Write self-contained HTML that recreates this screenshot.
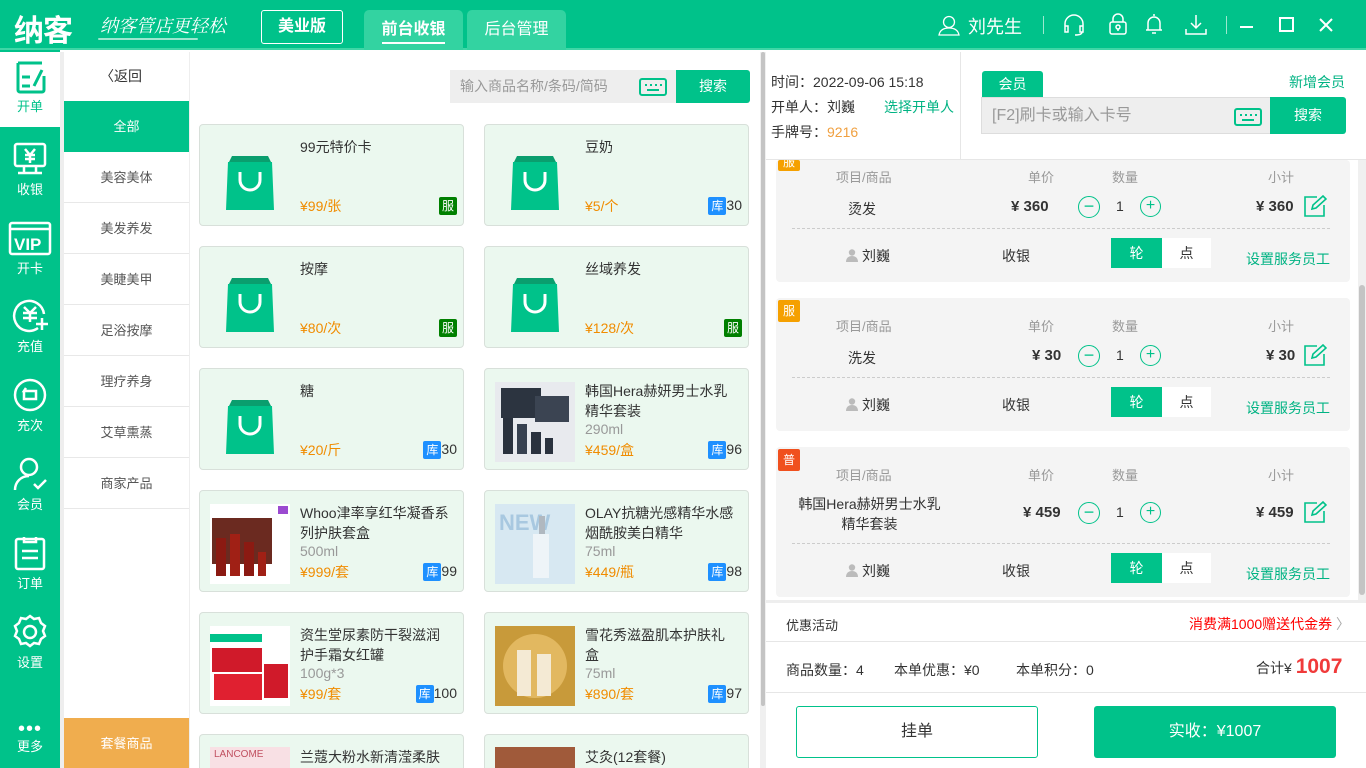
<!DOCTYPE html>
<html><head><meta charset="utf-8"><style>
*{margin:0;padding:0;box-sizing:border-box}
html{width:1366px;height:768px;overflow:hidden}
body{width:1366px;height:768px;overflow:hidden;position:relative;font-family:"Liberation Sans","Noto Sans CJK SC",sans-serif;font-size:14px;color:#333;background:#fff}
.a{position:absolute}
.g{background:#00c28a}
.hdr{left:0;top:0;width:1366px;height:50px;background:#00c28a;border-bottom:2px solid #3fd6a6}
.nav{left:0;top:50px;width:60px;height:718px;background:#00c28a}
.ni{position:absolute;left:0;width:60px;text-align:center;color:#fff;font-size:13px}
.ni svg{display:block;margin:0 auto 2px}
.cat{left:64px;width:125px;height:51px;line-height:51px;text-align:center;border-bottom:1px solid #e8e8e8;font-size:13px;color:#555}
.card{width:265px;height:102px;background:#ebf8ef;border:1px solid #d8e0da;border-radius:4px;overflow:hidden}
.card .t{position:absolute;left:100px;top:12px;width:155px;font-size:14px;line-height:20px;color:#333}
.card .s{position:absolute;left:100px;top:52px;font-size:14px;color:#999}
.card .p{position:absolute;left:100px;bottom:9px;color:#f08c00;font-size:14px}
.card .b{position:absolute;right:6px;bottom:10px;font-size:14px;color:#333}
.tag{display:inline-block;width:18px;height:18px;line-height:18px;text-align:center;color:#fff;font-size:12px;border-radius:2px;vertical-align:middle}
.img{position:absolute;left:10px;top:13px;width:80px;height:80px}
.oc{left:776px;width:574px;background:#f4f4f4;border-radius:4px}
.hd{color:#999;font-size:13px}
.u{display:inline-block;width:12px;height:13px;vertical-align:-1px;margin-right:4px}
</style></head><body>
<div class="a hdr"></div>
<div class="a" style="left:14px;top:6px;color:#fff;font-size:30px;font-weight:bold;letter-spacing:-1px">纳客</div>
<div class="a" style="left:100px;top:12px;color:#fff;font-size:18px;font-family:'Liberation Serif','Noto Serif CJK SC',serif;font-style:italic">纳客管店更轻松</div>
<div class="a" style="left:98px;top:38px;width:100px;height:2px;background:#9be8cf;border-radius:2px"></div>
<div class="a" style="left:261px;top:10px;width:82px;height:34px;border:1px solid #fff;border-radius:3px;color:#fff;font-weight:bold;font-size:16px;text-align:center;line-height:32px">美业版</div>
<div class="a" style="left:364px;top:10px;width:99px;height:40px;background:#33d3a1;border-radius:5px 5px 0 0;color:#fff;font-weight:bold;font-size:16px;text-align:center;line-height:40px">前台收银</div>
<div class="a" style="left:382px;top:42px;width:63px;height:2px;background:#fff"></div>
<div class="a" style="left:467px;top:10px;width:99px;height:40px;background:#33d3a1;border-radius:5px 5px 0 0;color:#fff;font-size:16px;text-align:center;line-height:40px">后台管理</div>
<svg class="a" style="left:938px;top:14px" width="22" height="22" fill="none" stroke="#fff" stroke-width="1.3"><circle cx="11" cy="8" r="5.5"/><path d="M1 21c1-5 5-7 10-7s9 2 10 7z"/></svg>
<div class="a" style="left:968px;top:13px;color:#fff;font-size:18px">刘先生</div>
<div class="a" style="left:1043px;top:16px;width:1px;height:18px;background:#9be8cf"></div>
<svg class="a" style="left:1062px;top:14px" width="24" height="22" fill="none" stroke="#fff" stroke-width="1.5"><path d="M3 13V10a9 9 0 0 1 18 0v3M3 12h3v6H3zM18 12h3v6h-3zM20 18c0 2-3 3-7 3"/></svg>
<svg class="a" style="left:1108px;top:12px" width="20" height="24" fill="none" stroke="#fff" stroke-width="1.5"><path d="M5 10V7a5 5 0 0 1 10 0v3"/><rect x="2" y="10" width="16" height="12" rx="2"/><circle cx="10" cy="15" r="2"/><path d="M10 17v2"/></svg>
<svg class="a" style="left:1144px;top:12px" width="20" height="24" fill="none" stroke="#fff" stroke-width="1.5"><path d="M10 2v2M4 18V11a6 6 0 0 1 12 0v7zM2 18h16M8 21h4"/></svg>
<svg class="a" style="left:1185px;top:14px" width="22" height="22" fill="none" stroke="#fff" stroke-width="1.5"><path d="M11 1v13M6 9l5 5 5-5M1 15v5h20v-5"/></svg>
<div class="a" style="left:1226px;top:16px;width:1px;height:18px;background:#9be8cf"></div>
<div class="a" style="left:1240px;top:26px;width:13px;height:2px;background:#fff"></div>
<div class="a" style="left:1279px;top:17px;width:15px;height:15px;border:2px solid #fff"></div>
<svg class="a" style="left:1319px;top:18px" width="14" height="14" stroke="#fff" stroke-width="2"><path d="M1 1l12 12M13 1L1 13"/></svg>

<div class="a nav"></div>
<div class="a" style="left:0;top:52px;width:60px;height:77px;background:#fff;border-bottom:2px solid #00c28a"></div>
<div class="ni" style="top:60px;color:#00c28a">
<svg width="36" height="34" fill="none" stroke="#00c28a" stroke-width="3"><path d="M6 3h24M6 3v27a2 2 0 0 0 2 2h22a2 2 0 0 0 2-2V16M10 17h8M10 26h8M22 26l8-16"/></svg>开单</div>
<div class="ni" style="top:141px"><svg width="36" height="36" fill="none" stroke="#fff" stroke-width="2.5"><rect x="3" y="3" width="30" height="22" rx="2"/><path d="M12 25v6M24 25v6M6 32h24M13 8l5 6 5-6M13 14h10M13 18h10M18 14v8"/></svg>收银</div>
<div class="ni" style="top:220px"><svg width="44" height="36" fill="none" stroke="#fff" stroke-width="2.5"><rect x="2" y="3" width="40" height="31" rx="2"/><path d="M2 9h40"/><text x="6" y="30" fill="#fff" stroke="none" font-size="17" font-weight="bold" font-family="Liberation Sans">VIP</text></svg>开卡</div>
<div class="ni" style="top:298px"><svg width="36" height="36" fill="none" stroke="#fff" stroke-width="2.5"><path d="M26 30A15 15 0 1 1 32 16"/><path d="M12 9l6 6 6-6M11 15h14M11 20h14M18 15v9M30 20v12M24 26h12"/></svg>充值</div>
<div class="ni" style="top:377px"><svg width="36" height="36" fill="none" stroke="#fff" stroke-width="2.5"><circle cx="18" cy="18" r="15"/><path d="M14 11l-2 3h12v8H12v-8"/></svg>充次</div>
<div class="ni" style="top:456px"><svg width="36" height="36" fill="none" stroke="#fff" stroke-width="2.5"><circle cx="17" cy="11" r="8"/><path d="M3 34c0-8 6-14 14-14M22 28l4 4 8-8"/></svg>会员</div>
<div class="ni" style="top:535px"><svg width="36" height="36" fill="none" stroke="#fff" stroke-width="2.5"><rect x="4" y="4" width="28" height="30" rx="2"/><path d="M12 2v5h12V2M10 16h16M10 23h16"/></svg>订单</div>
<div class="ni" style="top:614px"><svg width="36" height="36" fill="none" stroke="#fff" stroke-width="2.5"><path d="M18 2l4 3 5-1 2 5 4 3-2 5 2 5-4 3-2 5-5-1-4 3-4-3-5 1-2-5-4-3 2-5-2-5 4-3 2-5 5 1z"/><circle cx="18" cy="18" r="6"/></svg>设置</div>
<div class="ni" style="top:722px;height:40px"><div style="font-size:20px;line-height:14px;letter-spacing:1px">•••</div>更多</div>

<div class="a" style="left:60px;top:52px;width:4px;height:716px;background:#eee"></div>
<div class="a" style="left:189px;top:52px;width:1px;height:716px;background:#eee"></div>
<div class="a" style="left:100px;top:66px;font-size:14px;color:#333">〈返回</div>
<div class="a cat" style="top:101px;background:#00c28a;color:#fff;border:none">全部</div>
<div class="a cat" style="top:152px">美容美体</div>
<div class="a cat" style="top:203px">美发养发</div>
<div class="a cat" style="top:254px">美睫美甲</div>
<div class="a cat" style="top:305px">足浴按摩</div>
<div class="a cat" style="top:356px">理疗养身</div>
<div class="a cat" style="top:407px">艾草熏蒸</div>
<div class="a cat" style="top:458px">商家产品</div>
<div class="a cat" style="top:718px;background:#f0ad4e;color:#fff;border:none;height:50px">套餐商品</div>

<div class="a" style="left:450px;top:70px;width:226px;height:33px;background:#eee;color:#999;font-size:14px;line-height:33px;padding-left:10px">输入商品名称/条码/简码</div>
<svg class="a" style="left:639px;top:78px" width="28" height="18" fill="none" stroke="#00c28a" stroke-width="2"><rect x="1" y="1" width="26" height="16" rx="2"/><path d="M6 7h2M11 7h2M16 7h2M21 7h2M8 12h12"/></svg>
<div class="a g" style="left:676px;top:70px;width:74px;height:33px;color:#fff;line-height:33px;text-align:center;border-radius:0 3px 3px 0">搜索</div>

<div class="a card" style="left:199px;top:124px"><svg class="img" viewBox="0 0 80 80"><path d="M22 18h36l4 8H18z" fill="#0a9e6e"/><path d="M18 24h44l2 48H16z" fill="#00c28a"/><path d="M30 34v8a10 10 0 0 0 20 0v-8" fill="none" stroke="#fff" stroke-width="3"/></svg><div class="t">99元特价卡</div><div class="p">¥99/张</div><div class="b"><span class="tag" style="background:#008000">服</span></div></div>
<div class="a card" style="left:484px;top:124px"><svg class="img" viewBox="0 0 80 80"><path d="M22 18h36l4 8H18z" fill="#0a9e6e"/><path d="M18 24h44l2 48H16z" fill="#00c28a"/><path d="M30 34v8a10 10 0 0 0 20 0v-8" fill="none" stroke="#fff" stroke-width="3"/></svg><div class="t">豆奶</div><div class="p">¥5/个</div><div class="b"><span class="tag" style="background:#1e90ff">库</span>30</div></div>
<div class="a card" style="left:199px;top:246px"><svg class="img" viewBox="0 0 80 80"><path d="M22 18h36l4 8H18z" fill="#0a9e6e"/><path d="M18 24h44l2 48H16z" fill="#00c28a"/><path d="M30 34v8a10 10 0 0 0 20 0v-8" fill="none" stroke="#fff" stroke-width="3"/></svg><div class="t">按摩</div><div class="p">¥80/次</div><div class="b"><span class="tag" style="background:#008000">服</span></div></div>
<div class="a card" style="left:484px;top:246px"><svg class="img" viewBox="0 0 80 80"><path d="M22 18h36l4 8H18z" fill="#0a9e6e"/><path d="M18 24h44l2 48H16z" fill="#00c28a"/><path d="M30 34v8a10 10 0 0 0 20 0v-8" fill="none" stroke="#fff" stroke-width="3"/></svg><div class="t">丝域养发</div><div class="p">¥128/次</div><div class="b"><span class="tag" style="background:#008000">服</span></div></div>
<div class="a card" style="left:199px;top:368px"><svg class="img" viewBox="0 0 80 80"><path d="M22 18h36l4 8H18z" fill="#0a9e6e"/><path d="M18 24h44l2 48H16z" fill="#00c28a"/><path d="M30 34v8a10 10 0 0 0 20 0v-8" fill="none" stroke="#fff" stroke-width="3"/></svg><div class="t">糖</div><div class="p">¥20/斤</div><div class="b"><span class="tag" style="background:#1e90ff">库</span>30</div></div>
<div class="a card" style="left:484px;top:368px"><svg class="img" viewBox="0 0 80 80"><rect width="80" height="80" fill="#e8eaee"/><rect x="6" y="6" width="40" height="30" fill="#2c3440"/><rect x="40" y="14" width="34" height="26" fill="#3b4452"/><rect x="8" y="36" width="10" height="36" fill="#2a323e"/><rect x="22" y="42" width="10" height="30" fill="#374150"/><rect x="36" y="50" width="10" height="22" fill="#2a323e"/><rect x="50" y="56" width="8" height="16" fill="#2a323e"/></svg><div class="t" style="width:150px">韩国Hera赫妍男士水乳精华套装</div><div class="s">290ml</div><div class="p">¥459/盒</div><div class="b"><span class="tag" style="background:#1e90ff">库</span>96</div></div>
<div class="a card" style="left:199px;top:490px"><svg class="img" viewBox="0 0 80 80"><rect width="80" height="80" fill="#fff"/><rect x="2" y="14" width="60" height="46" fill="#6b2a20"/><rect x="6" y="34" width="10" height="38" fill="#8b1a12"/><rect x="20" y="30" width="10" height="42" fill="#a02015"/><rect x="34" y="38" width="10" height="34" fill="#8b1a12"/><rect x="48" y="48" width="8" height="24" fill="#a02015"/><rect x="68" y="2" width="10" height="8" fill="#9b4ad0"/></svg><div class="t">Whoo津率享红华凝香系列护肤套盒</div><div class="s">500ml</div><div class="p">¥999/套</div><div class="b"><span class="tag" style="background:#1e90ff">库</span>99</div></div>
<div class="a card" style="left:484px;top:490px"><svg class="img" viewBox="0 0 80 80"><rect width="80" height="80" fill="#d7e8f2"/><text x="4" y="26" font-size="22" font-weight="bold" fill="#a8c8e0" font-family="Liberation Sans">NEW</text><rect x="38" y="30" width="16" height="44" fill="#eef4f8"/><rect x="44" y="12" width="6" height="18" fill="#b0b8c0"/></svg><div class="t">OLAY抗糖光感精华水感烟酰胺美白精华</div><div class="s">75ml</div><div class="p">¥449/瓶</div><div class="b"><span class="tag" style="background:#1e90ff">库</span>98</div></div>
<div class="a card" style="left:199px;top:612px"><svg class="img" viewBox="0 0 80 80"><rect width="80" height="80" fill="#fff"/><rect x="0" y="8" width="52" height="8" fill="#00c28a"/><rect x="2" y="22" width="50" height="24" fill="#d01a2a"/><rect x="4" y="48" width="48" height="26" fill="#e02030"/><rect x="54" y="38" width="24" height="34" fill="#d01a2a"/></svg><div class="t" style="width:148px">资生堂尿素防干裂滋润护手霜女红罐</div><div class="s">100g*3</div><div class="p">¥99/套</div><div class="b"><span class="tag" style="background:#1e90ff">库</span>100</div></div>
<div class="a card" style="left:484px;top:612px"><svg class="img" viewBox="0 0 80 80"><rect width="80" height="80" fill="#c89a3a"/><circle cx="40" cy="40" r="32" fill="#e2b860"/><rect x="22" y="24" width="14" height="46" fill="#f4ead4"/><rect x="42" y="28" width="14" height="42" fill="#f4ead4"/></svg><div class="t" style="width:148px">雪花秀滋盈肌本护肤礼盒</div><div class="s">75ml</div><div class="p">¥890/套</div><div class="b"><span class="tag" style="background:#1e90ff">库</span>97</div></div>
<div class="a card" style="left:199px;top:734px;height:34px;border-bottom:none;border-radius:4px 4px 0 0"><div class="a" style="left:10px;top:12px;width:80px;height:22px;background:#f8e0e4;color:#c05060;font-size:10px;padding:2px 4px">LANCOME</div><div class="t">兰蔻大粉水新清滢柔肤</div></div>
<div class="a card" style="left:484px;top:734px;height:34px;border-bottom:none;border-radius:4px 4px 0 0"><div class="a" style="left:10px;top:12px;width:80px;height:22px;background:#a05a3a"></div><div class="t">艾灸(12套餐)</div></div>

<div class="a" style="left:760px;top:52px;width:6px;height:716px;background:#f0f0f0"></div>
<div class="a" style="left:761px;top:52px;width:4px;height:654px;background:#c4c4c4;border-radius:2px"></div>

<div class="a" style="left:766px;top:52px;width:600px;height:108px;background:#fff;border-bottom:1px solid #e6e6e6"></div>
<div class="a" style="left:960px;top:52px;width:1px;height:108px;background:#e6e6e6"></div>
<div class="a" style="left:771px;top:72px;font-size:14px">时间：2022-09-06 15:18</div>
<div class="a" style="left:771px;top:97px;font-size:14px">开单人：刘巍</div>
<div class="a" style="left:884px;top:97px;font-size:14px;color:#00b383">选择开单人</div>
<div class="a" style="left:771px;top:122px;font-size:14px">手牌号：<span style="color:#f0a040">9216</span></div>
<div class="a g" style="left:982px;top:71px;width:61px;height:27px;border-radius:3px 3px 0 0;color:#fff;text-align:center;line-height:27px">会员</div>
<div class="a" style="left:1289px;top:72px;color:#00b383;font-size:14px">新增会员</div>
<div class="a" style="left:981px;top:97px;width:290px;height:37px;background:#eee;border:1px solid #ddd;color:#999;font-size:16px;line-height:35px;padding-left:10px">[F2]刷卡或输入卡号</div>
<svg class="a" style="left:1234px;top:108px" width="28" height="18" fill="none" stroke="#00c28a" stroke-width="2"><rect x="1" y="1" width="26" height="16" rx="2"/><path d="M6 7h2M11 7h2M16 7h2M21 7h2M8 12h12"/></svg>
<div class="a g" style="left:1270px;top:97px;width:76px;height:37px;color:#fff;text-align:center;line-height:37px;border-radius:0 3px 3px 0">搜索</div>

<div class="a" style="left:1358px;top:160px;width:8px;height:440px;background:#f0f0f0"></div>
<div class="a" style="left:1359px;top:285px;width:6px;height:310px;background:#c4c4c4;border-radius:3px"></div>

<div class="a oc" style="top:160px;height:122px"></div>
<div class="a oc" style="top:298px;height:133px"></div>
<div class="a oc" style="top:447px;height:150px"></div>
<div class="a tag" style="left:778px;top:160px;background:#f5a000;width:22px;height:11px;line-height:4px;overflow:hidden">服</div>
<div class="a tag" style="left:778px;top:300px;background:#f5a000;width:22px;height:22px;line-height:22px">服</div>
<div class="a tag" style="left:778px;top:449px;background:#f0501e;width:22px;height:22px;line-height:22px">普</div>

<div class="a hd" style="left:836px;top:167px">项目/商品</div><div class="a hd" style="left:1028px;top:167px">单价</div><div class="a hd" style="left:1112px;top:167px">数量</div><div class="a hd" style="left:1268px;top:167px">小计</div>
<div class="a" style="left:848px;top:199px">烫发</div><div class="a" style="left:1011px;top:198px;font-weight:bold;font-size:15px">¥ 360</div>
<div class="a hd" style="left:836px;top:316px">项目/商品</div><div class="a hd" style="left:1028px;top:316px">单价</div><div class="a hd" style="left:1112px;top:316px">数量</div><div class="a hd" style="left:1268px;top:316px">小计</div>
<div class="a" style="left:848px;top:348px">洗发</div><div class="a" style="left:1032px;top:347px;font-weight:bold;font-size:15px">¥ 30</div>
<div class="a hd" style="left:836px;top:465px">项目/商品</div><div class="a hd" style="left:1028px;top:465px">单价</div><div class="a hd" style="left:1112px;top:465px">数量</div><div class="a hd" style="left:1268px;top:465px">小计</div>
<div class="a" style="left:792px;top:494px;width:155px;text-align:center;line-height:20px">韩国Hera赫妍男士水乳精华套装</div><div class="a" style="left:1023px;top:504px;font-weight:bold;font-size:15px">¥ 459</div>

<div class="a" style="left:1256px;top:198px;font-weight:bold;font-size:15px">¥ 360</div>
<div class="a" style="left:1266px;top:347px;font-weight:bold;font-size:15px">¥ 30</div>
<div class="a" style="left:1256px;top:504px;font-weight:bold;font-size:15px">¥ 459</div>

<div class="a" style="left:1078px;top:196px;width:22px;height:22px;border:1.5px solid #00c28a;border-radius:50%;color:#00c28a;text-align:center;line-height:18px;font-size:18px">−</div><div class="a" style="left:1116px;top:198px">1</div><div class="a" style="left:1140px;top:196px;width:21px;height:21px;border:1.5px solid #00c28a;border-radius:50%;color:#00c28a;text-align:center;line-height:17px;font-size:16px">+</div>
<div class="a" style="left:1078px;top:345px;width:22px;height:22px;border:1.5px solid #00c28a;border-radius:50%;color:#00c28a;text-align:center;line-height:18px;font-size:18px">−</div><div class="a" style="left:1116px;top:347px">1</div><div class="a" style="left:1140px;top:345px;width:21px;height:21px;border:1.5px solid #00c28a;border-radius:50%;color:#00c28a;text-align:center;line-height:17px;font-size:16px">+</div>
<div class="a" style="left:1078px;top:502px;width:22px;height:22px;border:1.5px solid #00c28a;border-radius:50%;color:#00c28a;text-align:center;line-height:18px;font-size:18px">−</div><div class="a" style="left:1116px;top:504px">1</div><div class="a" style="left:1140px;top:502px;width:21px;height:21px;border:1.5px solid #00c28a;border-radius:50%;color:#00c28a;text-align:center;line-height:17px;font-size:16px">+</div>
<svg class="a" style="left:1303px;top:195px" width="24" height="22" fill="none" stroke="#00c28a" stroke-width="1.6"><path d="M14 2H2v19h19V10M9 14l1-4 10-9 3 3-10 9z"/></svg>
<svg class="a" style="left:1303px;top:344px" width="24" height="22" fill="none" stroke="#00c28a" stroke-width="1.6"><path d="M14 2H2v19h19V10M9 14l1-4 10-9 3 3-10 9z"/></svg>
<svg class="a" style="left:1303px;top:501px" width="24" height="22" fill="none" stroke="#00c28a" stroke-width="1.6"><path d="M14 2H2v19h19V10M9 14l1-4 10-9 3 3-10 9z"/></svg>

<div class="a" style="left:792px;top:228px;width:538px;border-top:1px dashed #ccc"></div>
<div class="a" style="left:792px;top:377px;width:538px;border-top:1px dashed #ccc"></div>
<div class="a" style="left:792px;top:543px;width:538px;border-top:1px dashed #ccc"></div>

<div class="a" style="left:846px;top:246px"><svg class="u" viewBox="0 0 12 13" fill="#bbb"><circle cx="6" cy="3.5" r="3.2"/><path d="M0 13c0-4 2.5-6 6-6s6 2 6 6z"/></svg>刘巍</div><div class="a" style="left:1002px;top:246px">收银</div>
<div class="a g" style="left:1111px;top:238px;width:51px;height:30px;color:#fff;text-align:center;line-height:30px">轮</div><div class="a" style="left:1162px;top:238px;width:49px;height:30px;background:#fff;text-align:center;line-height:30px">点</div>
<div class="a" style="left:1246px;top:249px;color:#00b383">设置服务员工</div>
<div class="a" style="left:846px;top:395px"><svg class="u" viewBox="0 0 12 13" fill="#bbb"><circle cx="6" cy="3.5" r="3.2"/><path d="M0 13c0-4 2.5-6 6-6s6 2 6 6z"/></svg>刘巍</div><div class="a" style="left:1002px;top:395px">收银</div>
<div class="a g" style="left:1111px;top:387px;width:51px;height:30px;color:#fff;text-align:center;line-height:30px">轮</div><div class="a" style="left:1162px;top:387px;width:49px;height:30px;background:#fff;text-align:center;line-height:30px">点</div>
<div class="a" style="left:1246px;top:398px;color:#00b383">设置服务员工</div>
<div class="a" style="left:846px;top:561px"><svg class="u" viewBox="0 0 12 13" fill="#bbb"><circle cx="6" cy="3.5" r="3.2"/><path d="M0 13c0-4 2.5-6 6-6s6 2 6 6z"/></svg>刘巍</div><div class="a" style="left:1002px;top:561px">收银</div>
<div class="a g" style="left:1111px;top:553px;width:51px;height:30px;color:#fff;text-align:center;line-height:30px">轮</div><div class="a" style="left:1162px;top:553px;width:49px;height:30px;background:#fff;text-align:center;line-height:30px">点</div>
<div class="a" style="left:1246px;top:564px;color:#00b383">设置服务员工</div>

<div class="a" style="left:766px;top:600px;width:600px;height:168px;background:#fff;border-top:3px solid #eee"></div>
<div class="a" style="left:766px;top:641px;width:600px;height:1px;background:#e6e6e6"></div>
<div class="a" style="left:766px;top:692px;width:600px;height:1px;background:#e6e6e6"></div>
<div class="a" style="left:786px;top:615px;font-size:13px">优惠活动</div>
<div class="a" style="left:1189px;top:614px;font-size:14px;color:#f00">消费满1000赠送代金券 <span style="color:#aaa">〉</span></div>
<div class="a" style="left:786px;top:660px;font-size:14px">商品数量：4</div>
<div class="a" style="left:894px;top:660px;font-size:14px">本单优惠：¥0</div>
<div class="a" style="left:1016px;top:660px;font-size:14px">本单积分：0</div>
<div class="a" style="left:1256px;top:655px;font-size:14px">合计¥ <span style="color:#f03a3a;font-size:21px;font-weight:bold">1007</span></div>
<div class="a" style="left:796px;top:706px;width:242px;height:52px;border:1px solid #00c28a;border-radius:3px;text-align:center;line-height:50px;font-size:16px">挂单</div>
<div class="a g" style="left:1094px;top:706px;width:242px;height:52px;border-radius:3px;text-align:center;line-height:52px;font-size:16px;color:#fff">实收：¥1007</div>
</body></html>
